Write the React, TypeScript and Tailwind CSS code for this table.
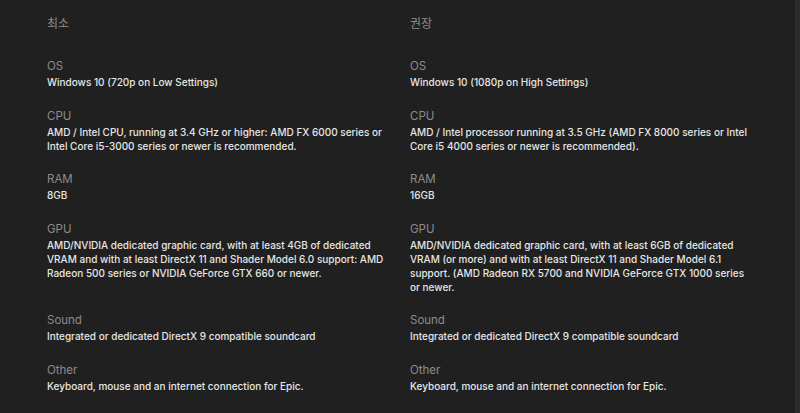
import React from "react";

const rows: { label: string; min: string; rec: string }[] = [
  { label: "OS", min: "Windows 10 (720p on Low Settings)", rec: "Windows 10 (1080p on High Settings)" },
  {
    label: "CPU",
    min: "AMD / Intel CPU, running at 3.4 GHz or higher: AMD FX 6000 series or Intel Core i5-3000 series or newer is recommended.",
    rec: "AMD / Intel processor running at 3.5 GHz (AMD FX 8000 series or Intel Core i5 4000 series or newer is recommended).",
  },
  { label: "RAM", min: "8GB", rec: "16GB" },
  {
    label: "GPU",
    min: "AMD/NVIDIA dedicated graphic card, with at least 4GB of dedicated VRAM and with at least DirectX 11 and Shader Model 6.0 support: AMD Radeon 500 series or NVIDIA GeForce GTX 660 or newer.",
    rec: "AMD/NVIDIA dedicated graphic card, with at least 6GB of dedicated VRAM (or more) and with at least DirectX 11 and Shader Model 6.1 support. (AMD Radeon RX 5700 and NVIDIA GeForce GTX 1000 series or newer.",
  },
  { label: "Sound", min: "Integrated or dedicated DirectX 9 compatible soundcard", rec: "Integrated or dedicated DirectX 9 compatible soundcard" },
  { label: "Other", min: "Keyboard, mouse and an internet connection for Epic.", rec: "Keyboard, mouse and an internet connection for Epic." },
];

function Cell({ label, value }: { label: string; value: string }) {
  return (
    <div className="flex flex-col">
      <div className="text-[11.5px] leading-[18px] text-[#8c8c8c]">{label}</div>
      <div className="w-[345px] text-[10px] leading-[14px] font-medium text-[#e6e6e6]">{value}</div>
    </div>
  );
}

export default function App() {
  return (
    <div
      className="relative w-[800px] h-[413px] overflow-hidden bg-[#202020]"
      style={{ fontFamily: '"Inter", "Noto Sans CJK KR", sans-serif' }}
    >
      <div className="pl-[47px] pt-[16px]">
        <div className="grid grid-cols-[363px_363px] text-[12px] leading-[16px] text-[#8c8c8c]">
          <div>최소</div>
          <div>권장</div>
        </div>
        <div className="mt-[25px] flex flex-col gap-[17.5px]">
          {rows.map((r) => (
            <div key={r.label} className="grid grid-cols-[363px_363px]">
              <Cell label={r.label} value={r.min} />
              <Cell label={r.label} value={r.rec} />
            </div>
          ))}
        </div>
      </div>
      <div className="absolute right-0 top-0 h-full w-[5px] bg-[#2b2b2b]" />
    </div>
  );
}
